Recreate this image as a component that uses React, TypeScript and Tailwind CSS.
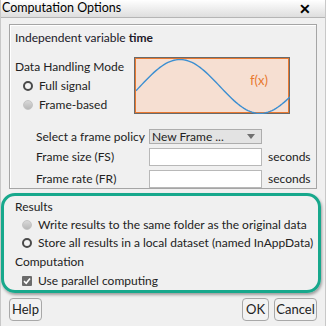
import React from "react";

const sinePath = (() => {
  let d = "";
  for (let x = 0; x <= 154; x += 2) {
    const y = 27.5 - 27 * Math.cos((2 * Math.PI * (x - 44)) / 160);
    d += (x === 0 ? "M" : "L") + x + " " + y.toFixed(2) + " ";
  }
  return d;
})();

function Radio({ checked }: { checked?: boolean }) {
  return checked ? (
    <span className="w-[10px] h-[10px] rounded-full border-[2.5px] border-[#4a4a4a] bg-[#f4f4f4] shrink-0" />
  ) : (
    <span className="w-[10px] h-[10px] rounded-full border border-[#c4c4c4] bg-gradient-to-b from-[#d8d8d8] to-[#b8b8b8] shrink-0" />
  );
}

function Check() {
  return (
    <span className="w-[10px] h-[10px] bg-[#6b6b6b] rounded-[1px] flex items-center justify-center shrink-0">
      <svg width="8" height="8" viewBox="0 0 8 8">
        <path d="M1 4.2 L3.2 6.3 L7 1.5" stroke="#fff" strokeWidth="1.6" fill="none" />
      </svg>
    </span>
  );
}

function Button({ label, w }: { label: string; w: string }) {
  return (
    <button className={`${w} h-[23px] border border-[#a8a8a8] rounded-[4px] bg-[#f2f2f2] text-[13px] leading-none text-[#222] flex items-center justify-center`}>
      {label}
    </button>
  );
}

export default function App() {
  return (
    <div
      className="w-[326px] h-[326px] bg-[#f0f0f0] text-[#222] overflow-hidden border-x border-[#c8c8c8] text-[12px] leading-[14px] whitespace-nowrap"
      style={{ fontFamily: 'Lato, "Open Sans", sans-serif' }}
    >
      {/* title bar */}
      <div className="h-[18px] bg-gradient-to-b from-white to-[#dedede] border-b border-[#b5b5b5] flex items-center justify-between pl-[1px] pr-[14px]">
        <span className="text-[12.5px] leading-none text-black">Computation Options</span>
        <span className="text-[14px] leading-none font-bold text-black">✕</span>
      </div>

      {/* top panel */}
      <div className="mx-[8px] mt-[6px] h-[165px] border border-[#a5a5a5] shadow-[inset_1px_1px_0_#fff] pl-[5px]">
        <div className="mt-[6px] h-[14px] text-[#201828]">
          Independent variable <span className="font-bold">time</span>
        </div>
        <div className="flex mt-[12px]">
          <div className="w-[119px] pt-[3px]">
            <div className="h-[14px]">Data Handling Mode</div>
            <div className="flex items-center gap-[6px] pl-[8px] mt-[5px] h-[14px]">
              <Radio checked />
              <span>Full signal</span>
            </div>
            <div className="flex items-center gap-[6px] pl-[8px] mt-[5px] h-[14px]">
              <Radio />
              <span>Frame-based</span>
            </div>
          </div>
          <div className="w-[156px] h-[57px] border border-[#6a6a6a]">
            <div className="w-full h-full border border-[#e87830] bg-[#f6dfd2] relative">
              <svg className="absolute inset-0" width="154" height="55" viewBox="0 0 154 55">
                <path d={sinePath} stroke="#3d8fd1" strokeWidth="1.4" fill="none" />
              </svg>
              <span className="absolute left-[114px] top-[15px] text-[13px] leading-none text-[#e8782e]">f(x)</span>
            </div>
          </div>
        </div>
        <div className="pl-[21px] mt-[15px] flex flex-col gap-[4px]">
          <div className="flex items-center h-[15px]">
            <span className="w-[113px]">Select a frame policy</span>
            <div className="w-[113px] h-[15px] bg-[#e3e3e3] border border-[#adadad] flex items-center justify-between pl-[2px] pr-[6px]">
              <span className="leading-none">New Frame ...</span>
              <svg width="8" height="5" viewBox="0 0 8 5">
                <path d="M0 0 L8 0 L4 5 Z" fill="#707070" />
              </svg>
            </div>
          </div>
          <div className="flex items-center h-[18px]">
            <span className="w-[113px]">Frame size (FS)</span>
            <div className="w-[113px] h-[18px] bg-white border border-[#b8b8b8]" />
            <span className="ml-[6px]">seconds</span>
          </div>
          <div className="flex items-center h-[18px]">
            <span className="w-[113px]">Frame rate (FR)</span>
            <div className="w-[113px] h-[18px] bg-white border border-[#b8b8b8]" />
            <span className="ml-[6px]">seconds</span>
          </div>
        </div>
      </div>

      {/* highlighted section */}
      <div className="ml-[0px] mr-[4px] mt-[4px] h-[100px] border-[3px] border-[#17a88c] rounded-[14px] shadow-[1px_2px_3px_rgba(0,0,0,0.35)] pl-[11px] pt-[3px]">
        <div className="h-[16px] leading-[16px]">Results</div>
        <div className="flex items-center gap-[6px] pl-[7px] mt-[2px] h-[16px]">
          <Radio />
          <span>Write results to the same folder as the original data</span>
        </div>
        <div className="flex items-center gap-[6px] pl-[7px] mt-[2px] h-[16px]">
          <Radio checked />
          <span>Store all results in a local dataset (named InAppData)</span>
        </div>
        <div className="h-[16px] leading-[16px] mt-[3px]">Computation</div>
        <div className="flex items-center gap-[6px] pl-[7px] mt-[3px] h-[16px]">
          <Check />
          <span>Use parallel computing</span>
        </div>
      </div>

      {/* buttons */}
      <div className="flex items-center mt-[5px] pl-[8px] pr-[8px]">
        <Button label="Help" w="w-[33px]" />
        <div className="flex-1" />
        <Button label="OK" w="w-[27px]" />
        <div className="w-[5px]" />
        <Button label="Cancel" w="w-[43px]" />
      </div>
    </div>
  );
}
